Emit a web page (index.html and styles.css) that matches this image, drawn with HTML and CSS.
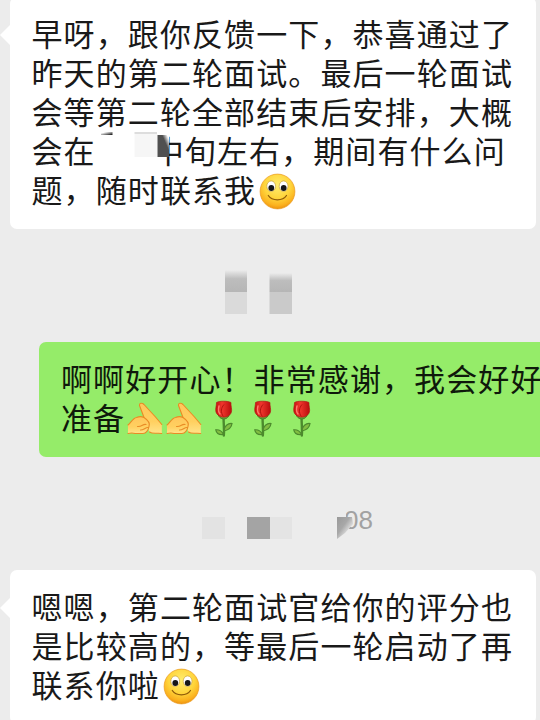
FILE: index.html
```html
<!DOCTYPE html>
<html lang="zh-CN">
<head>
  <meta charset="utf-8">
  <meta name="viewport" content="width=device-width, initial-scale=1">
  <title>聊天</title>
  <link rel="stylesheet" href="styles.css">
</head>
<body>

  <!-- shared emoji -->
  <svg class="defs" width="0" height="0">
    <defs>
      <radialGradient id="face" cx="50%" cy="32%" r="68%">
        <stop offset="0" stop-color="#ffed6e"/>
        <stop offset="0.55" stop-color="#ffd53c"/>
        <stop offset="0.85" stop-color="#fbb21f"/>
        <stop offset="1" stop-color="#ee9410"/>
      </radialGradient>
      <linearGradient id="skin" x1="0" y1="0" x2="0" y2="1">
        <stop offset="0" stop-color="#ffc65c"/>
        <stop offset="0.6" stop-color="#ffd060"/>
        <stop offset="1" stop-color="#ffe38a"/>
      </linearGradient>
      <linearGradient id="petal" x1="0" y1="0" x2="1" y2="0">
        <stop offset="0" stop-color="#c4120f"/>
        <stop offset="0.4" stop-color="#f0362d"/>
        <stop offset="1" stop-color="#b80d0c"/>
      </linearGradient>
      <linearGradient id="fade" x1="0" y1="0" x2="0" y2="1">
        <stop offset="0" stop-color="#ececec"/>
        <stop offset="0.4" stop-color="#bdbdbd"/>
        <stop offset="1" stop-color="#b6b6b6"/>
      </linearGradient>
      <linearGradient id="corner" x1="0" y1="0" x2="1" y2="1">
        <stop offset="0" stop-color="#999"/>
        <stop offset="0.4" stop-color="#a8a8a8"/>
        <stop offset="0.75" stop-color="#ececec"/>
      </linearGradient>
      <linearGradient id="smudge" x1="0" y1="0" x2="1" y2="1">
        <stop offset="0.2" stop-color="#fff"/>
        <stop offset="0.9" stop-color="#222"/>
      </linearGradient>
      <linearGradient id="dark" x1="1" y1="0" x2="0.4" y2="0.5">
        <stop offset="0.15" stop-color="#fff"/>
        <stop offset="0.6" stop-color="#505050"/>
      </linearGradient>
      <symbol id="smile" viewBox="0 0 39 39">
        <circle cx="19.5" cy="19.5" r="17.4" fill="url(#face)" stroke="#e99a20" stroke-width="0.7"/>
        <ellipse cx="13.2" cy="14.2" rx="4.4" ry="5.3" fill="#fff" stroke="#c9a23c" stroke-width="0.7"/>
        <ellipse cx="25.6" cy="14.2" rx="4.4" ry="5.3" fill="#fff" stroke="#c9a23c" stroke-width="0.7"/>
        <circle cx="13.3" cy="16" r="2.9" fill="#151618"/>
        <circle cx="25.7" cy="16" r="2.9" fill="#151618"/>
        <path d="M10.3 23.5c3.8 5.8 14.4 5.8 18.2 0" fill="none" stroke="#8f5b08" stroke-width="1.3" stroke-linecap="round"/>
      </symbol>
      <symbol id="hands" viewBox="0 0 39 39">
        <!-- right hand, pointing up -->
        <path d="M12.500 5.500C12 3 15 2.500 17 4.500L28.500 17L34.800 24.500V33.500C30 32.500 26 34.500 22.500 32L17 18z" fill="url(#skin)"/>
        <path d="M17 17.500L12.500 5.500C12 3 15 2.500 17 4.500L28.500 17L34.800 24.500M22.500 32C26 34.500 30 32.500 34.800 33.500" fill="none" stroke="#e98b25" stroke-width="1.100" stroke-linecap="round" stroke-linejoin="round"/>
        <!-- left fist in front -->
        <path d="M1 25C4 22.500 6 18 9.500 17.500C12 16.500 15 16.500 17 17.500C20 19.500 23.500 23 22 26.500C21.500 30 19 33.500 16 33.500H8C5 32.500 3 33 1 33.500z" fill="url(#skin)"/>
        <path d="M1 25C4 22.500 6 18 9.500 17.500C12 16.500 15 16.500 17 17.500C20 19.500 23.500 23 22 26.500C21.500 30 19 33.500 16 33.500H8C5 32.500 3 33 1 33.500M19 24.500C16 23.500 15 27 10.500 26.500M21 27.500C18 27.500 17 30 13.500 30" fill="none" stroke="#e98b25" stroke-width="1.100" stroke-linecap="round" stroke-linejoin="round"/>
      </symbol>
      <symbol id="rose" viewBox="0 0 39 39">
        <path d="M18.600 17C18.500 25 19.500 30 18.800 35.500" fill="none" stroke="#4c8a2d" stroke-width="2.400" stroke-linecap="round"/>
        <path d="M19 31C19 26 23 23 27 23.500C26.500 28 23.500 30 19 31z" fill="#82bd42" stroke="#4c8a2d" stroke-width="1.200"/>
        <path d="M18.500 34.500C16.500 30.500 13.500 29.500 10.800 29.800C11.500 33.500 14 35 18.500 34.500z" fill="#82bd42" stroke="#4c8a2d" stroke-width="1.200"/>
        <path d="M13 14C13.500 17 16 19 18.800 19C22 19 24 16.500 24.500 14z" fill="#71a63a" stroke="#43812a"/>
        <path d="M11.500 2.500C14 0.800 23 0.800 26 2.500C25.500 7 28.500 11.500 24.500 15C21.500 17.800 16 17.800 13 15C9 11.500 11.500 7 11.500 2.500z" fill="url(#petal)" stroke="#b01a14" stroke-width="0.700"/>
        <path d="M19 4.500C16 8 15.500 12 18.300 16.500" fill="none" stroke="#a8100d" stroke-width="0.900"/>
        <path d="M14 6C13 10 13.300 12 15 14" fill="none" stroke="#ff796b" stroke-width="1.500" stroke-linecap="round"/>
      </symbol>
    </defs>
  </svg>

  <main class="chat">
    <div class="bubble received">
      早呀，跟你反馈一下，恭喜通过了<br>
      昨天的第二轮面试。最后一轮面试<br>
      会等第二轮全部结束后安排，大概<br>
      会在<span class="redacted"><svg class="mosaic" width="78" height="39" viewBox="0 0 78 39">
        <path d="M5 0H16.500V3H5z" fill="url(#smudge)"/>
        <path d="M55 0H66V32H55z" fill="#fff"/>
        <path d="M38.500 0H61V2H38.500z" fill="#ddd"/>
        <path d="M38.500 2H61.500V25H38.500z" fill="#f6f6f6"/>
        <path d="M61.500 3H73V25H61.500z" fill="url(#dark)"/>
      </svg></span>中旬左右，期间有什么问<br>
      题，随时联系我<svg class="emoji"><use href="#smile"/></svg>
    </div>

    <div class="time">
      <svg class="mosaic-row" width="540" height="113" viewBox="0 0 540 113">
        <rect x="225" y="41" width="22" height="22" fill="url(#fade)"/>
        <rect x="225" y="63" width="22" height="22" fill="#dadada"/>
        <rect x="269.500" y="44" width="22.500" height="19" fill="url(#fade)"/>
        <rect x="269.500" y="63" width="22.500" height="22" fill="#cacaca"/>
      </svg>
    </div>

    <div class="bubble sent">
      啊啊好开心！非常感谢，我会好好<br>
      准备<svg class="emoji"><use href="#hands"/></svg><svg class="emoji"><use href="#hands"/></svg><svg class="emoji"><use href="#rose"/></svg><svg class="emoji"><use href="#rose"/></svg><svg class="emoji"><use href="#rose"/></svg>
    </div>

    <div class="time">
      <span class="clock">08</span>
      <svg class="mosaic-row" width="540" height="113" viewBox="0 0 540 113">
        <rect x="202" y="60" width="23" height="22" fill="#e3e3e3"/>
        <rect x="247" y="60" width="23" height="22" fill="#a4a4a4"/>
        <rect x="270" y="60" width="22" height="22" fill="#e4e4e4"/>
        <path d="M337 50H346V60H350L350 68L348 74L337 82z" fill="#ececec"/>
        <path d="M337 60H352L353 67L345 76L337 82z" fill="url(#corner)"/>
      </svg>
    </div>

    <div class="bubble received">
      嗯嗯，第二轮面试官给你的评分也<br>
      是比较高的，等最后一轮启动了再<br>
      联系你啦<svg class="emoji"><use href="#smile"/></svg>
    </div>
  </main>

</body>
</html>
```

FILE: styles.css
```css
html, body {
  height: 100%;
  margin: 0;
  overflow: hidden;
}
body {
  background: #ececec;
  font-family: "Noto Sans CJK SC", sans-serif;
}
.defs {
  position: absolute;
}
.chat {
  display: flex;
  flex-direction: column;
  margin-top: -3px;
}
.bubble {
  position: relative;
  flex: none;
  box-sizing: border-box;
  padding: 15.5px 22px 21.5px;
  border-radius: 7px;
  color: #191919;
  font-size: 31px;
  letter-spacing: 1.1px;
  line-height: 39px;
  white-space: nowrap;
}
.received {
  width: 526.5px;
  margin-left: 9.5px;
  background: #fff;
}
.received::before {
  content: "";
  position: absolute;
  left: -10px;
  top: 28px;
  border: solid transparent;
  border-width: 10px 10px 10px 0;
  border-right-color: #fff;
}
.sent {
  width: 527px;
  margin-left: 39px;
  background: #95ec69;
  color: #0f190b;
}
.emoji {
  position: relative;
  top: 3px;
  left: 2px;
  width: 39px;
  height: 39px;
  vertical-align: top;
}
.redacted {
  display: inline-block;
  position: relative;
  width: 57px;
  height: 39px;
  vertical-align: top;
}
.mosaic {
  position: absolute;
  left: 0;
  top: 2px;
}
.time {
  display: grid;
  height: 113px;
  flex: none;
}
.mosaic-row,
.clock {
  grid-area: 1 / 1;
}
.clock {
  padding-left: 344px;
  color: #a2a2a2;
  font-family: "Liberation Sans", sans-serif;
  font-size: 26px;
  line-height: 127px;
}
```
